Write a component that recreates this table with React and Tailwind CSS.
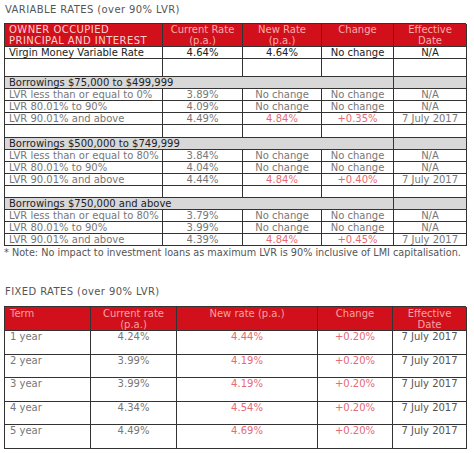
import React from "react";

const F = { fontFamily: '"DejaVu Sans", "Noto Sans", sans-serif' };

const c1 = "grid grid-cols-[158px_80px_79px_72px_73px]";
const c2 = "grid grid-cols-[86px_86px_141px_75px_74px]";

function Row1({ cells, h = "h-[12px]", dark = false }) {
  return (
    <div className={`${c1} ${h}`}>
      {cells.map((c, i) => (
        <div
          key={i}
          className={`border-r border-b border-[#333] leading-[11px] whitespace-nowrap ${i === 0 ? "text-left pl-[4px]" : "text-center"} ${c && c.red ? "text-[#e66a76]" : dark ? "text-[#222]" : "text-[#777]"}`}
        >
          {c && c.red ? c.t : c}
        </div>
      ))}
    </div>
  );
}

function GrayRow({ text }) {
  return (
    <div className={`${c1} h-[12px] bg-[#d8d8d8]`}>
      <div className="col-span-4 border-r border-b border-[#333] pl-[4px] leading-[11px] text-[#222]">{text}</div>
      <div className="border-r border-b border-[#333]"></div>
    </div>
  );
}

function Empty({ h }) {
  return <Row1 h={h} cells={["", "", "", "", ""]} />;
}

function Group({ title, rows }) {
  return (
    <>
      <GrayRow text={title} />
      {rows.map((r, i) => (
        <Row1 key={i} cells={r} />
      ))}
    </>
  );
}

const fixed = [
  ["1 year", "4.24%", "4.44%"],
  ["2 year", "3.99%", "4.19%"],
  ["3 year", "3.99%", "4.19%"],
  ["4 year", "4.34%", "4.54%"],
  ["5 year", "4.49%", "4.69%"],
];

export default function App() {
  return (
    <div className="w-[474px] h-[453px] bg-white text-[10px]" style={F}>
      <div className="pt-[4px] pl-[5px] h-[23px] text-[#555] text-[10px] leading-[12px] tracking-[0.4px]">VARIABLE RATES (over 90% LVR)</div>
      <div className="ml-[4px] w-[462px] border-l border-t border-[#333]">
        <div className={`${c1} h-[23px] bg-[#d2101b]`}>
          <div className="border-r border-b border-[#333] pl-[4px] leading-[11px] text-[#fbd2d2] whitespace-nowrap tracking-[0.45px]">OWNER OCCUPIED<br />PRINCIPAL AND INTEREST</div>
          <div className="border-r border-b border-[#333] text-center leading-[11px] text-[#f7aeae]">Current Rate<br />(p.a.)</div>
          <div className="border-r border-b border-[#333] text-center leading-[11px] text-[#f7aeae]">New Rate<br />(p.a.)</div>
          <div className="border-r border-b border-[#333] text-center leading-[11px] text-[#f7aeae]">Change</div>
          <div className="border-r border-b border-[#333] text-center leading-[11px] text-[#f7aeae]">Effective<br />Date</div>
        </div>
        <Row1 dark cells={["Virgin Money Variable Rate", "4.64%", "4.64%", "No change", "N/A"]} />
        <Empty h="h-[18px]" />
        <Group
          title="Borrowings $75,000 to $499,999"
          rows={[
            ["LVR less than or equal to 0%", "3.89%", "No change", "No change", "N/A"],
            ["LVR 80.01% to 90%", "4.09%", "No change", "No change", "N/A"],
            ["LVR 90.01% and above", "4.49%", { red: true, t: "4.84%" }, { red: true, t: "+0.35%" }, "7 July 2017"],
          ]}
        />
        <Empty h="h-[13px]" />
        <Group
          title="Borrowings $500,000 to $749,999"
          rows={[
            ["LVR less than or equal to 80%", "3.84%", "No change", "No change", "N/A"],
            ["LVR 80.01% to 90%", "4.04%", "No change", "No change", "N/A"],
            ["LVR 90.01% and above", "4.44%", { red: true, t: "4.84%" }, { red: true, t: "+0.40%" }, "7 July 2017"],
          ]}
        />
        <Empty h="h-[12px]" />
        <Group
          title="Borrowings $750,000 and above"
          rows={[
            ["LVR less than or equal to 80%", "3.79%", "No change", "No change", "N/A"],
            ["LVR 80.01% to 90%", "3.99%", "No change", "No change", "N/A"],
            ["LVR 90.01% and above", "4.39%", { red: true, t: "4.84%" }, { red: true, t: "+0.45%" }, "7 July 2017"],
          ]}
        />
      </div>
      <div className="pl-[4px] h-[40px] text-[#555] text-[9.7px] leading-[13px] whitespace-nowrap">* Note: No impact to investment loans as maximum LVR is 90% inclusive of LMI capitalisation.</div>
      <div className="pl-[5px] h-[20px] text-[#555] text-[10px] leading-[12px] tracking-[0.4px]">FIXED RATES (over 90% LVR)</div>
      <div className="ml-[4px] w-[462px] border-l-[1.5px] border-t-[1.5px] border-[#333]">
        <div className={`${c2} h-[24px] bg-[#d2101b] text-[#f5a3a3] leading-[11px]`}>
          <div className="border-r-[1.5px] border-b-[1.5px] border-[#333] pl-[5px] pt-[1px]">Term</div>
          <div className="border-r-[1.5px] border-b-[1.5px] border-[#333] text-center pt-[1px]">Current rate<br />(p.a.)</div>
          <div className="border-r-[1.5px] border-b-[1.5px] border-[#333] text-center pt-[1px]">New rate (p.a.)</div>
          <div className="border-r-[1.5px] border-b-[1.5px] border-[#333] text-center pt-[1px]">Change</div>
          <div className="border-r-[1.5px] border-b-[1.5px] border-[#333] text-center pt-[1px]">Effective<br />Date</div>
        </div>
        {fixed.map((r, i) => (
          <div key={i} className={`${c2} h-[23.5px] leading-[11px]`}>
            <div className="border-r-[1.5px] border-b-[1.5px] border-[#333] pl-[5px] text-[#777]">{r[0]}</div>
            <div className="border-r-[1.5px] border-b-[1.5px] border-[#333] text-center text-[#777]">{r[1]}</div>
            <div className="border-r-[1.5px] border-b-[1.5px] border-[#333] text-center text-[#e66a76]">{r[2]}</div>
            <div className="border-r-[1.5px] border-b-[1.5px] border-[#333] text-center text-[#e66a76]">+0.20%</div>
            <div className="border-r-[1.5px] border-b-[1.5px] border-[#333] text-center text-[#555]">7 July 2017</div>
          </div>
        ))}
      </div>
    </div>
  );
}
